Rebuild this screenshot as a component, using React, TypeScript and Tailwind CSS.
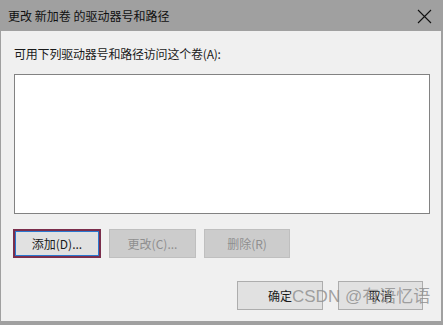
const font = "font-['Microsoft_YaHei','Noto_Sans_CJK_SC',sans-serif]"

function Btn({ label, width, disabled, focused }: { label: string; width: string; disabled?: boolean; focused?: boolean }) {
  if (focused) {
    return (
      <div className={`${width} h-[29px] border-2 border-[#7b2e4c] p-0`}>
        <div className="w-full h-full border border-[#2a78d0] bg-[#e1e1e1] flex items-center justify-center text-[12px] text-[#1a1a1a]">
          {label}
        </div>
      </div>
    )
  }
  return (
    <div
      className={`${width} h-[29px] border flex items-center justify-center text-[12px] ${
        disabled ? 'border-[#bfbfbf] bg-[#cccccc] text-[#8f8f8f]' : 'border-[#adadad] bg-[#e1e1e1] text-[#1a1a1a]'
      }`}
    >
      {label}
    </div>
  )
}

export default function App() {
  return (
    <div className={`relative w-[443px] h-[325px] flex flex-col bg-[#a0a0a0] ${font}`}>
      {/* Title bar */}
      <div className="h-[31px] flex items-center justify-between pl-[8px] pr-[11px] bg-[#a0a0a0]">
        <span className="text-[12px] text-[#101010] whitespace-pre">更改 新加卷 的驱动器号和路径</span>
        <svg width="15" height="15" viewBox="0 0 15 15" className="mt-[1px]">
          <path d="M1 1 L14 14 M14 1 L1 14" stroke="#111" strokeWidth="1.1" />
        </svg>
      </div>

      {/* Body */}
      <div className="flex-1 mx-[1px] mr-[2px] mb-[4px] bg-[#f0f0f0] flex flex-col pl-[12px] pr-[11px]">
        <div className="pt-[15px] h-[31px] leading-[16px] text-[12px] text-[#1a1a1a] pl-[1px] tracking-[-0.2px]">
          可用下列驱动器号和路径访问这个卷(A):
        </div>
        <div className="mt-[12px] ml-[1px] h-[140px] border border-[#828282] bg-white" />

        <div className="mt-[15px] flex gap-[8px]">
          <Btn label="添加(D)..." width="w-[88px]" focused />
          <Btn label="更改(C)..." width="w-[87px]" disabled />
          <Btn label="删除(R)" width="w-[86px]" disabled />
        </div>

        <div className="mt-[23px] flex justify-end gap-[15px] pr-[7px]">
          <Btn label="确定" width="w-[86px]" />
          <Btn label="取消" width="w-[85px]" />
        </div>
      </div>

      {/* watermark */}
      <span className="absolute left-[292px] top-[286px] whitespace-nowrap text-[17px] leading-[22px] text-[#8c8c8c]/80 font-['Liberation_Sans','Noto_Sans_CJK_SC',sans-serif]">
        CSDN @有语忆语
      </span>
    </div>
  )
}
